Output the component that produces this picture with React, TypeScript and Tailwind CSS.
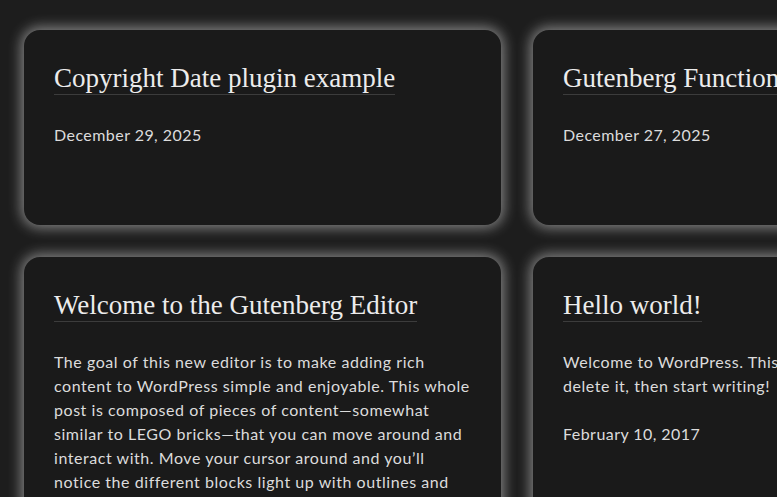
import React from "react";

type Post = {
  title: string;
  excerpt?: string;
  date: string;
};

const posts: Post[] = [
  { title: "Copyright Date plugin example", date: "December 29, 2025" },
  { title: "Gutenberg Functions", date: "December 27, 2025" },
  {
    title: "Welcome to the Gutenberg Editor",
    excerpt:
      "The goal of this new editor is to make adding rich content to WordPress simple and enjoyable. This whole post is composed of pieces of content\u2014somewhat similar to LEGO bricks\u2014that you can move around and interact with. Move your cursor around and you\u2019ll notice the different blocks light up with outlines and arrows. Press the arrows to reposition blocks quickly.",
    date: "January 6, 2018",
  },
  {
    title: "Hello world!",
    excerpt:
      "Welcome to WordPress. This is your first post. Edit or delete it, then start writing!",
    date: "February 10, 2017",
  },
];

function PostCard({ post }: { post: Post }) {
  return (
    <article className="rounded-[16px] bg-[#1a1a1a] px-[30px] pt-[32px] pb-[78px] shadow-[0_0_13px_3px_rgba(255,255,255,0.45)]">
      <h2 className="inline-block border-b border-[#3c3c3c] font-['Liberation_Serif',serif] text-[27px] leading-[32px] text-[#ececec]">
        {post.title}
      </h2>
      {post.excerpt && (
        <p className="mt-[28px] text-[16px] leading-[24px] tracking-[0.55px] text-[#dcdcdc]">
          {post.excerpt}
        </p>
      )}
      <div className={post.excerpt ? "mt-[24px]" : "mt-[28px]"}>
        <time className="text-[16px] leading-[24px] tracking-[0.45px] text-[#dcdcdc]">
          {post.date}
        </time>
      </div>
    </article>
  );
}

export default function App() {
  return (
    <div className="h-[497px] w-[777px] overflow-hidden bg-[#1d1d1d] font-['Lato',sans-serif]">
      <div className="grid w-[1040px] grid-cols-[477px_477px] gap-[32px] pl-[24px] pt-[30px]">
        {posts.map((p) => (
          <PostCard key={p.title} post={p} />
        ))}
      </div>
    </div>
  );
}
